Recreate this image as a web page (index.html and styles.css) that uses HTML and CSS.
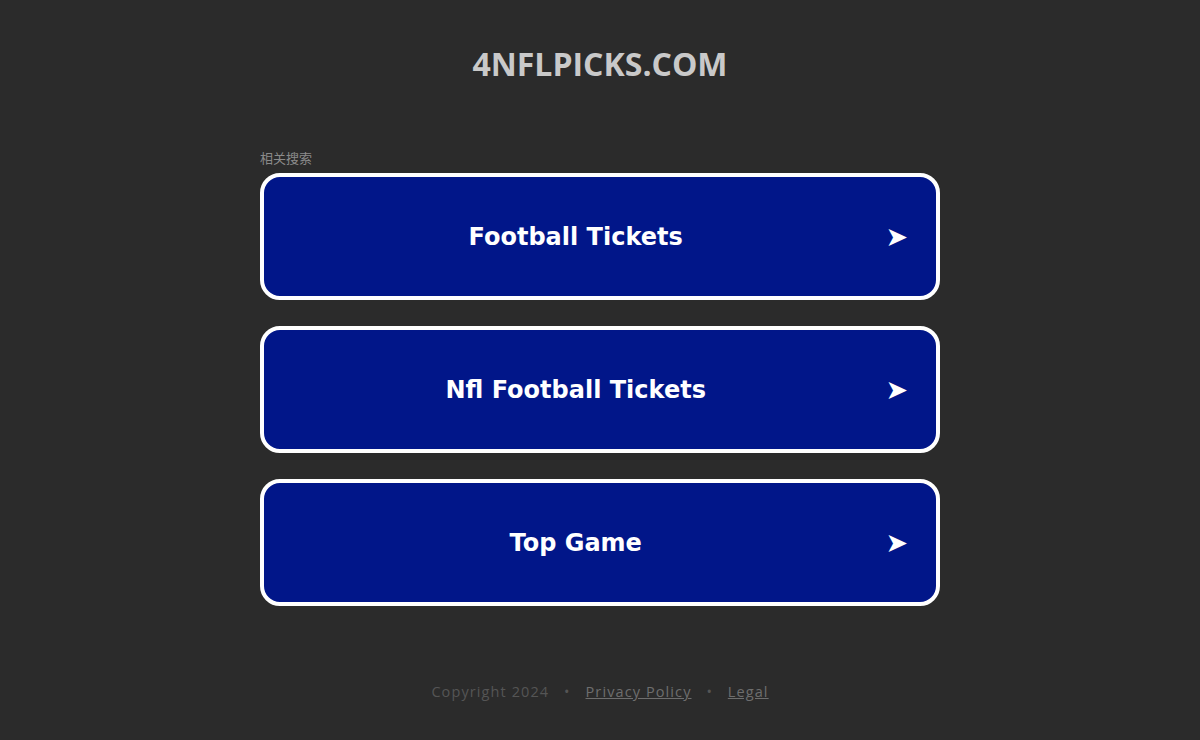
FILE: index.html
```html
<!DOCTYPE html>
<html>
<head>
  <title>4nflpicks.com</title>
  <link rel="stylesheet" href="styles.css">
</head>
<body>
  <div id="page">
    <h1 class="domain">4NFLPICKS.COM</h1>

    <div class="related">
      <p class="related-title">相关搜索</p>
      <a class="search-link" href="#"><span class="label">Football Tickets</span><span class="arrow">➤</span></a>
      <a class="search-link" href="#"><span class="label">Nfl Football Tickets</span><span class="arrow">➤</span></a>
      <a class="search-link" href="#"><span class="label">Top Game</span><span class="arrow">➤</span></a>
    </div>

    <div class="footer">
      <span>Copyright 2024</span>
      <span class="dot">•</span>
      <a href="#">Privacy Policy</a>
      <span class="dot">•</span>
      <a href="#">Legal</a>
    </div>
  </div>
</body>
</html>
```

FILE: styles.css
```css
body {
  margin: 0;
  background-color: #2b2b2b;
  font-family: 'Open Sans', sans-serif;
}

#page {
  display: flex;
  flex-direction: column;
  align-items: center;
  height: 740px;
}

.domain {
  margin: 44px 0 0;
  font-size: 32px;
  font-weight: 700;
  line-height: 40px;
  color: #c9c9c9;
}

.related {
  width: 680px;
  margin-top: 65px;
}

.related-title {
  margin: 0 0 6px;
  font-family: 'Noto Sans CJK SC', sans-serif;
  font-size: 13px;
  line-height: 18px;
  color: #8a8a8a;
}

.search-link {
  display: flex;
  align-items: center;
  box-sizing: border-box;
  height: 127px;
  margin-bottom: 26px;
  padding: 0 28px 0 0;
  border: 4px solid #ffffff;
  border-radius: 20px;
  background-color: #011689;
  color: #ffffff;
  text-decoration: none;
  font-family: 'DejaVu Sans', Verdana, sans-serif;
  font-weight: 700;
}

.label {
  flex: 1;
  text-align: center;
  font-size: 24px;
  padding-left: 2px;
}

.arrow {
  font-size: 27px;
}

.footer {
  margin-top: 50px;
  font-size: 14.5px;
  letter-spacing: 1.1px;
  color: #555555;
}

.footer a {
  color: #6e6e6e;
}

.dot {
  margin: 0 10px;
}
```
